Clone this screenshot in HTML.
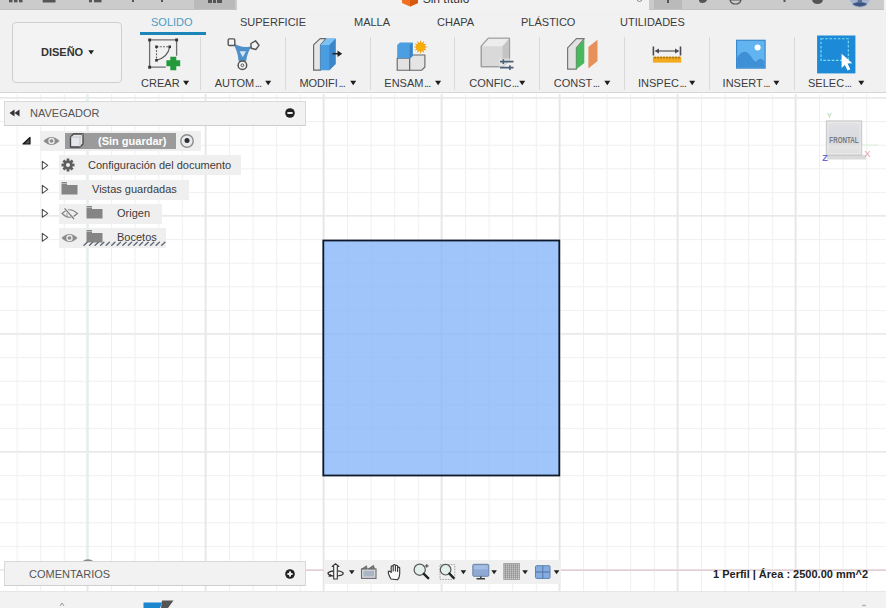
<!DOCTYPE html>
<html><head><meta charset="utf-8">
<style>
*{margin:0;padding:0;box-sizing:border-box}
html,body{width:886px;height:608px;overflow:hidden;background:#fff;font-family:"Liberation Sans",sans-serif;font-size:11px;color:#333}
.a{position:absolute}
#top{left:0;top:0;width:886px;height:10px;background:#f2f2f2}
#ribbon{left:0;top:10px;width:886px;height:83px;background:#f1f1f1;border-bottom:1px solid #d6d6d6}
.tab{position:absolute;top:16px;font-size:11px;color:#3c3c3c;white-space:nowrap}
.sep{position:absolute;top:37px;width:1px;height:53px;background:#d9d9d9}
.lbl{position:absolute;top:77px;font-size:11px;color:#3c3c3c;white-space:nowrap;line-height:12px}
.dots{letter-spacing:-0.9px;margin-left:0.5px}
.crt{position:absolute;top:81px;width:0;height:0;border-left:2.9px solid transparent;border-right:2.9px solid transparent;border-top:4.2px solid #1e1e1e}
.car{display:inline-block;width:0;height:0;border-left:3px solid transparent;border-right:3px solid transparent;border-top:4px solid #333;vertical-align:2px;margin-left:3px}
#vp{left:0;top:94px;width:886px;height:497px;background:#fff;overflow:hidden}
#bottom{left:0;top:591px;width:886px;height:17px;background:#f2f2f2;border-top:1px solid #e6e6e6}
.row{position:absolute;height:19px;background:#efefef}
.rt{position:absolute;font-size:11px;color:#3c3c3c;white-space:nowrap;line-height:12px}
</style></head><body>
<!-- top bar -->
<div class="a" id="top"></div>
<div class="a" style="left:0;top:0;width:237px;height:10px;background:#cbcbcb;border-bottom:1px solid #c2c2c2"></div>
<div class="a" style="left:194px;top:0;width:41px;height:9px;background:#bababa"></div>
<div class="a" style="left:649px;top:0;width:235px;height:10px;background:#cbcbcb;border-bottom:1px solid #c2c2c2"></div>
<div class="a" style="left:654px;top:0;width:28px;height:9px;background:#bababa"></div>

<!-- ribbon -->
<div class="a" id="ribbon"></div>
<div class="a" style="left:12px;top:22px;width:110px;height:61px;border:1px solid #cfcfcf;border-radius:4px;background:#f3f3f3"></div>
<div class="a" style="left:41px;top:46px;font-weight:bold;font-size:11px;color:#333;line-height:12px">DISEÑO</div>
<svg class="a" style="left:0;top:0" width="100" height="60"><path d="M88.3 50.3 H94 L91.15 54.6Z" fill="#222"/></svg>

<div class="tab" style="left:151px;color:#4a9cc6">SOLIDO</div>
<div class="a" style="left:140px;top:32px;width:66px;height:3px;background:#1d86b8"></div>
<div class="tab" style="left:240px">SUPERFICIE</div>
<div class="tab" style="left:354px">MALLA</div>
<div class="tab" style="left:437px">CHAPA</div>
<div class="tab" style="left:521px">PLÁSTICO</div>
<div class="tab" style="left:620px">UTILIDADES</div>

<div class="sep" style="left:200px"></div>
<div class="sep" style="left:285px"></div>
<div class="sep" style="left:370px"></div>
<div class="sep" style="left:454px"></div>
<div class="sep" style="left:539px"></div>
<div class="sep" style="left:624px"></div>
<div class="sep" style="left:709px"></div>
<div class="sep" style="left:794px"></div>

<div class="lbl" style="left:141.1px">CREAR</div>
<div class="lbl" style="left:214.7px">AUTOM<span class="dots">...</span></div>
<div class="lbl" style="left:299.4px">MODIFI<span class="dots">...</span></div>
<div class="lbl" style="left:384.3px">ENSAM<span class="dots">...</span></div>
<div class="lbl" style="left:469.2px">CONFIC<span class="dots">...</span></div>
<div class="lbl" style="left:553.7px">CONST<span class="dots">...</span></div>
<div class="lbl" style="left:638px">INSPEC<span class="dots">...</span></div>
<div class="lbl" style="left:722.6px">INSERT<span class="dots">...</span></div>
<div class="lbl" style="left:808px">SELEC<span class="dots">...</span></div>

<svg class="a" style="left:0;top:0" width="886" height="93"><path d="M183.1 80.8 H189.1 L186.1 85.2Z M265.2 80.8 H271.2 L268.2 85.2Z M350.2 80.8 H356.2 L353.2 85.2Z M435.1 80.8 H441.1 L438.1 85.2Z M519.2 80.8 H525.2 L522.2 85.2Z M604.3 80.8 H610.3 L607.3 85.2Z M689.2 80.8 H695.2 L692.2 85.2Z M773.4 80.8 H779.4 L776.4 85.2Z M858.3 80.8 H864.3 L861.3 85.2Z" fill="#1e1e1e"/></svg>
<svg class="a" style="left:0;top:0" width="886" height="93" viewBox="0 0 886 93">
<!-- CREAR -->
<g>
 <path d="M149.6 39.9 H176.6 V55.7 M149.6 39.9 V67.2 H165.7" fill="none" stroke="#6e6e6e" stroke-width="1.3"/>
 <rect x="148.2" y="38.5" width="2.9" height="2.9" fill="#333"/>
 <rect x="175.2" y="38.5" width="2.9" height="2.9" fill="#333"/>
 <rect x="148.2" y="65.8" width="2.9" height="2.9" fill="#333"/>
 <path d="M156.5 46.8 H169.7 M156.5 46.8 V60.3" fill="none" stroke="#666" stroke-width="1.1" stroke-dasharray="2 1.2"/>
 <path d="M169.7 46.8 Q168 57 156.5 60.3" fill="none" stroke="#555" stroke-width="1.1"/>
 <rect x="155.2" y="45.5" width="2.6" height="2.6" fill="#333"/>
 <rect x="168.4" y="45.5" width="2.6" height="2.6" fill="#333"/>
 <rect x="155.2" y="59" width="2.6" height="2.6" fill="#333"/>
 <path d="M170.3 56.7 H176.3 V60.3 H180.2 V66.3 H176.3 V70.2 H170.3 V66.3 H166.4 V60.3 H170.3Z" fill="#249a3c"/>
</g>
<!-- AUTOM -->
<g>
 <path d="M233.8 43.8 Q242 49.5 251 46.8 Q246.5 52 245.6 61 H239.2 Q238.5 51.5 233.8 43.8Z" fill="#4f90c8" stroke="#4f90c8" stroke-width="1.2" stroke-linejoin="round"/>
 <path d="M239.6 51.2 L246 51.2 L242.8 57.2Z" fill="#cfe6f7"/>
 <rect x="228.2" y="38.9" width="6.6" height="6.6" rx="1.2" fill="#f4f4f4" stroke="#555" stroke-width="1.4"/>
 <path d="M250.9 43.5 L255.5 40.8 L259 45.3 L255.8 49.5 L251.2 48.3Z" fill="#f4f4f4" stroke="#555" stroke-width="1.4" stroke-linejoin="round"/>
 <circle cx="242.4" cy="65.3" r="4.3" fill="#f4f4f4" stroke="#555" stroke-width="1.5"/>
 <circle cx="242.4" cy="65.3" r="1.4" fill="none" stroke="#555" stroke-width="1"/>
</g>
<!-- MODIFI -->
<g>
 <path d="M313.6 44.9 L320.1 38.6 H326 L320.5 44.9 V70.2 H313.6Z" fill="#e6e6e6" stroke="#6a6a6a" stroke-width="1.2" stroke-linejoin="round"/>
 <path d="M320.3 44.9 L326.8 38.6 H335.6 V64 L329.3 70.2 H320.3Z" fill="#4a9de0"/>
 <path d="M329.3 44.9 L335.6 38.6 V64 L329.3 70.2Z" fill="#3b86c8"/>
 <path d="M320.3 44.9 L326.8 38.6 H335.6 L329.3 44.9Z" fill="#7cc0f4"/>
 <path d="M332.5 53.7 H338.5" stroke="#222" stroke-width="1.5"/>
 <path d="M337.5 50.5 L342.2 53.7 L337.5 56.9Z" fill="#222"/>
</g>
<!-- ENSAM -->
<g>
 <path d="M397.2 58.3 H409.7 V70.2 H397.2Z" fill="#e2e2e2" stroke="#666" stroke-width="1.1"/>
 <path d="M409.7 55 H424.9 V67 L421.8 70.2 H409.7Z" fill="#e4e4e4" stroke="#666" stroke-width="1.1" stroke-linejoin="round"/>
 <path d="M397.2 45 L400 42.6 H412.7 V56 L410.5 58.3 H397.2Z" fill="#4b9ee0"/>
 <path d="M409.7 45 L412.7 42.6 V56 L409.7 58.3Z" fill="#3b84c4"/>
 <path d="M420.60 40.00 L421.64 43.14 L424.10 40.94 L423.43 44.17 L426.66 43.50 L424.46 45.96 L427.60 47.00 L424.46 48.04 L426.66 50.50 L423.43 49.83 L424.10 53.06 L421.64 50.86 L420.60 54.00 L419.56 50.86 L417.10 53.06 L417.77 49.83 L414.54 50.50 L416.74 48.04 L413.60 47.00 L416.74 45.96 L414.54 43.50 L417.77 44.17 L417.10 40.94 L419.56 43.14Z" fill="#f0a010"/>
 <circle cx="420.6" cy="47.0" r="3.6" fill="#f8b000"/>
</g>
<!-- CONFIC -->
<g>
 <path d="M481.3 46.2 L488.2 38.3 H509.5 V60.3 L503 66.6 H481.3Z" fill="#d9d9d9" stroke="#9a9a9a" stroke-width="1.2" stroke-linejoin="round"/>
 <path d="M481.3 46.2 L488.2 38.3 H509.5 L502.6 46.2Z" fill="#ececec"/>
 <path d="M502.6 46.2 L509.5 38.3 V60.3 L502.6 66.6Z" fill="#c4c4c4"/>
 <path d="M481.3 46.2 L488.2 38.3 H509.5 V60.3 L503 66.6 H481.3Z" fill="none" stroke="#a0a0a0" stroke-width="1.1" stroke-linejoin="round"/>
 <rect x="499.5" y="58.5" width="15" height="11" fill="#f0f0f0" opacity="0.6"/>
 <path d="M500 61.6 H513.5 M500 67.6 H513.5" stroke="#4a6178" stroke-width="1.6"/>
 <path d="M503.3 59.3 V63.9 M509.9 65.3 V69.9" stroke="#4a6178" stroke-width="1.6"/>
</g>
<!-- CONST -->
<g>
 <path d="M567.6 47.8 L576.4 38.6 H584.3 L576.4 47.8 V69.2 H567.6Z" fill="#e2e2e2" stroke="#777" stroke-width="1.2" stroke-linejoin="round"/>
 <path d="M576.4 47.8 L584.3 39.5 V63 L576.4 69.2Z" fill="#49b85c"/>
 <path d="M588.4 47 L597.5 39.7 V61 L588.4 68.4Z" fill="#e8905a"/>
</g>
<!-- INSPEC -->
<g>
 <path d="M653.4 46.5 V55.4 M680.5 46.5 V55.4" stroke="#4a4a55" stroke-width="1.6"/>
 <path d="M657 51 H677" stroke="#555" stroke-width="1.2"/>
 <path d="M654.5 51 L659 48.5 V53.5Z M679.4 51 L675 48.5 V53.5Z" fill="#4a4a55"/>
 <rect x="652.9" y="56.7" width="28.3" height="5.9" fill="#f2aa1c"/>
 <path d="M655 56.7 V58.5 M658 56.7 V58.5 M661 56.7 V58.5 M664 56.7 V58.5 M667 56.7 V58.5 M670 56.7 V58.5 M673 56.7 V58.5 M676 56.7 V58.5 M679 56.7 V58.5" stroke="#6a4a10" stroke-width="1"/>
</g>
<!-- INSERT -->
<g>
 <rect x="736.6" y="40.3" width="28.5" height="27.8" fill="#62b4f0" stroke="#3c88cc" stroke-width="1.2"/>
 <path d="M737.2 67.5 V58 Q740 52 744.5 51.8 Q749 52 753 59.5 Q755 62.5 757 61 Q759 58.5 761 58.7 Q763.5 59.5 764.5 62 V67.5Z" fill="#3d8fd6"/>
 <circle cx="757.6" cy="47.5" r="3" fill="#fff"/>
</g>
<!-- SELEC -->
<g>
 <rect x="817.1" y="35.5" width="38.3" height="37.9" fill="#1c8ad6"/>
 <rect x="821" y="38.7" width="27.3" height="21.7" fill="none" stroke="#7ee0f0" stroke-width="1.1" stroke-dasharray="2.6 1.6"/>
 <path d="M841.6 53.7 L852.3 63.2 L847.5 63.6 L850.3 69.2 L847.6 70.5 L844.9 64.9 L841.6 68Z" fill="#fff"/>
</g>
</svg>

<!-- viewport -->
<div class="a" id="vp">
<svg width="886" height="497" style="position:absolute;left:0;top:0">
  <defs>
    <pattern id="minor" x="0" y="0" width="23.6" height="23.6" patternUnits="userSpaceOnUse" patternTransform="translate(87.4 3.5)">
      <rect x="0" y="0" width="1.1" height="23.6" fill="#f0f0f0"/>
      <rect x="0" y="0" width="23.6" height="1.1" fill="#f0f0f0"/>
    </pattern>
    <pattern id="major" x="0" y="0" width="118" height="118" patternUnits="userSpaceOnUse" patternTransform="translate(86.7 3)">
      <rect x="0.1" y="0" width="1.4" height="118" fill="#e1e1e1"/>
      <rect x="0" y="0" width="118" height="1.6" fill="#e9e9e9"/>
    </pattern>
  </defs>
  <rect width="886" height="497" fill="url(#minor)"/>
  <rect width="886" height="497" fill="url(#major)"/>
  <rect x="86.3" y="0" width="2" height="476" fill="#e2f1e5"/>
  <rect x="87" y="475.5" width="799" height="1.5" fill="#e6cfd4"/>
  <rect x="323.3" y="146.5" width="236" height="235" fill="#85b5fa" fill-opacity="0.78" stroke="none"/>
  <rect x="323.3" y="146.5" width="236" height="235" fill="none" stroke="#0e1a2c" stroke-width="1.8"/>
</svg>
</div>


<!-- navigator -->
<div class="a" style="left:4px;top:101px;width:302px;height:25px;background:#f2f2f2;border:1px solid #d9d9d9;border-bottom-color:#cfcfcf"></div>
<svg class="a" style="left:9px;top:108px" width="12" height="10" viewBox="0 0 12 10"><path d="M0.5 5 L5.5 1.5 V8.5Z M5.5 5 L10.5 1.5 V8.5Z" fill="#333"/></svg>
<div class="a" style="left:30px;top:107px;font-size:11px;color:#555;line-height:12px">NAVEGADOR</div>
<svg class="a" style="left:284px;top:107px" width="12" height="12" viewBox="0 0 12 12"><circle cx="6" cy="6" r="4.8" fill="#222"/><rect x="3.4" y="5" width="5.2" height="2" fill="#eee"/></svg>

<!-- tree -->
<svg class="a" style="left:22px;top:136px" width="9" height="9" viewBox="0 0 9 9"><path d="M1 8 L8 1.5 V8Z" fill="#555" stroke="#111" stroke-width="1.2" stroke-linejoin="round"/></svg>
<div class="row" style="left:40px;top:131px;width:161px;height:20px"></div>
<svg class="a" style="left:43px;top:135px" width="17" height="12" viewBox="0 0 17 12"><path d="M0.5 6 Q8.5 -2 16.5 6 Q8.5 14 0.5 6Z" fill="#8c8c8c"/><circle cx="8.5" cy="6" r="3.2" fill="#e8e8e8"/><circle cx="8.5" cy="6" r="1.8" fill="#8c8c8c"/></svg>
<div class="a" style="left:65px;top:133px;width:111px;height:16px;background:#9b9b9b"></div>
<svg class="a" style="left:69px;top:133px" width="16" height="15" viewBox="0 0 16 15"><path d="M1.5 4 L4.5 1 H14 V11 L11 14 H1.5Z" fill="#e4e6ec" stroke="#444" stroke-width="1.3" stroke-linejoin="round"/><path d="M1.5 4 H11 V14 M11 4 L14 1" fill="none" stroke="#bbb" stroke-width="0.8"/></svg>
<div class="rt" style="left:98px;top:135px;color:#fff;font-weight:bold">(Sin guardar)</div>
<svg class="a" style="left:179px;top:133px" width="16" height="16" viewBox="0 0 16 16"><circle cx="8" cy="8" r="6.2" fill="#e9ebf0" stroke="#8c8c8c" stroke-width="1.4"/><circle cx="8" cy="7.6" r="2.5" fill="#2e2e2e"/></svg>

<svg class="a" style="left:40.5px;top:160px" width="8" height="11" viewBox="0 0 8 11"><path d="M1.3 1.3 L6.8 5.3 L1.3 9.3Z" fill="none" stroke="#4a4a4a" stroke-width="1.05" stroke-linejoin="round"/></svg>
<div class="row" style="left:59px;top:155px;width:182px;height:20px"></div>
<svg class="a" style="left:61px;top:158px" width="14" height="14" viewBox="0 0 14 14"><g fill="#5e5e5e"><circle cx="7" cy="7" r="4.6"/><rect x="5.6" y="0.5" width="2.8" height="13"/><rect x="0.5" y="5.6" width="13" height="2.8"/><rect x="5.6" y="0.5" width="2.8" height="13" transform="rotate(45 7 7)"/><rect x="5.6" y="0.5" width="2.8" height="13" transform="rotate(-45 7 7)"/></g><circle cx="7" cy="7" r="2" fill="#efefef"/></svg>
<div class="rt" style="left:88px;top:159px">Configuración del documento</div>

<svg class="a" style="left:40.5px;top:184px" width="8" height="11" viewBox="0 0 8 11"><path d="M1.3 1.3 L6.8 5.3 L1.3 9.3Z" fill="none" stroke="#4a4a4a" stroke-width="1.05" stroke-linejoin="round"/></svg>
<div class="row" style="left:59px;top:180px;width:130px;height:20px"></div>
<svg class="a" style="left:61px;top:182px" width="17" height="13" viewBox="0 0 17 13"><path d="M0.5 1.5 H6 V3 H16.5 V12.5 H0.5Z" fill="#858585"/><rect x="0.5" y="0" width="5.5" height="1" fill="#858585"/></svg>
<div class="rt" style="left:92px;top:183px">Vistas guardadas</div>

<svg class="a" style="left:40.5px;top:208px" width="8" height="11" viewBox="0 0 8 11"><path d="M1.3 1.3 L6.8 5.3 L1.3 9.3Z" fill="none" stroke="#4a4a4a" stroke-width="1.05" stroke-linejoin="round"/></svg>
<div class="row" style="left:59px;top:204px;width:103px;height:20px"></div>
<svg class="a" style="left:61px;top:207px" width="18" height="13" viewBox="0 0 18 13"><path d="M1 6.5 Q8.5 -1 16.5 6.5 Q8.5 14 1 6.5Z" fill="none" stroke="#888" stroke-width="1.15"/><path d="M6.3 9.5 Q4.8 6.5 7.2 4.2" fill="none" stroke="#999" stroke-width="1"/><path d="M4.4 1.5 L13 12" stroke="#efefef" stroke-width="2.6"/><path d="M3.6 1.3 L13 12" stroke="#7a7a7a" stroke-width="1.2"/></svg>
<svg class="a" style="left:86px;top:206px" width="17" height="13" viewBox="0 0 17 13"><path d="M0.5 1.5 H6 V3 H16.5 V12.5 H0.5Z" fill="#858585"/><rect x="0.5" y="0" width="5.5" height="1" fill="#858585"/></svg>
<div class="rt" style="left:117px;top:207px">Origen</div>

<svg class="a" style="left:40.5px;top:232px" width="8" height="11" viewBox="0 0 8 11"><path d="M1.3 1.3 L6.8 5.3 L1.3 9.3Z" fill="none" stroke="#4a4a4a" stroke-width="1.05" stroke-linejoin="round"/></svg>
<div class="row" style="left:59px;top:228px;width:107px;height:20px"></div>
<svg class="a" style="left:61px;top:232px" width="17" height="12" viewBox="0 0 17 12"><path d="M0.5 6 Q8.5 -2 16.5 6 Q8.5 14 0.5 6Z" fill="#8c8c8c"/><circle cx="8.5" cy="6" r="3.2" fill="#e8e8e8"/><circle cx="8.5" cy="6" r="1.8" fill="#8c8c8c"/></svg>
<svg class="a" style="left:86px;top:230px" width="17" height="13" viewBox="0 0 17 13"><path d="M0.5 1.5 H6 V3 H16.5 V12.5 H0.5Z" fill="#858585"/><rect x="0.5" y="0" width="5.5" height="1" fill="#858585"/></svg>
<div class="rt" style="left:117px;top:231px">Bocetos</div>
<svg class="a" style="left:83px;top:241px" width="84" height="6" viewBox="0 0 84 6"><path d="M1.00 4.2 L4.20 1.2 M6.55 4.2 L9.75 1.2 M12.10 4.2 L15.30 1.2 M17.65 4.2 L20.85 1.2 M23.20 4.2 L26.40 1.2 M28.75 4.2 L31.95 1.2 M34.30 4.2 L37.50 1.2 M39.85 4.2 L43.05 1.2 M45.40 4.2 L48.60 1.2 M50.95 4.2 L54.15 1.2 M56.50 4.2 L59.70 1.2 M62.05 4.2 L65.25 1.2 M67.60 4.2 L70.80 1.2 M73.15 4.2 L76.35 1.2 M78.70 4.2 L81.90 1.2" stroke="#646c78" stroke-width="1.5" stroke-linecap="round"/></svg>

<!-- comments -->
<svg class="a" style="left:80px;top:555px" width="16" height="7"><path d="M2 6.5 Q8 2.2 14 6.5Z" fill="#8a8a8a"/></svg>

<div class="a" style="left:4px;top:561px;width:302px;height:25px;background:#f2f2f2;border:1px solid #d9d9d9;border-bottom-color:#cfcfcf"></div>
<div class="a" style="left:29px;top:568px;font-size:11px;color:#555;line-height:12px">COMENTARIOS</div>
<svg class="a" style="left:284px;top:568px" width="12" height="12" viewBox="0 0 12 12"><circle cx="6" cy="6" r="4.8" fill="#222"/><rect x="3.4" y="5" width="5.2" height="2" fill="#eee"/><rect x="5" y="3.4" width="2" height="5.2" fill="#eee"/></svg>

<!-- status -->
<div class="a" style="left:713px;top:568px;font-size:11px;font-weight:bold;color:#222;line-height:12px">1 Perfil | Área : 2500.00 mm^2</div>

<!-- bottom -->
<div class="a" id="bottom"></div>


<!-- viewcube -->
<svg class="a" style="left:818px;top:108px" width="60" height="55" viewBox="818 108 60 55">
 <defs><linearGradient id="vcg" x1="0" y1="0" x2="0" y2="1">
  <stop offset="0" stop-color="#e2e2e2"/><stop offset="0.3" stop-color="#dcdde2"/><stop offset="0.65" stop-color="#d9dadd"/><stop offset="0.75" stop-color="#e4e4e4"/><stop offset="1" stop-color="#dedede"/>
 </linearGradient></defs>
 <rect x="827" y="155" width="39" height="4.5" fill="#cdcdcd" opacity="0.75"/>
 <rect x="826.3" y="120.9" width="35.4" height="34.4" fill="url(#vcg)" stroke="#c9c9c9" stroke-width="1"/>
 <rect x="828" y="122.5" width="32" height="31" fill="none" stroke="#ebebeb" stroke-width="0.8"/>
 <path d="M862 145 H878" stroke="#d8f0d8" stroke-width="1"/>
 <text x="0" y="0" font-family="Liberation Sans" font-size="9.3" font-weight="bold" fill="#7a7a7a" text-anchor="middle" transform="translate(844 142.8) scale(0.67 1)">FRONTAL</text>
 <text x="829.3" y="117.5" font-family="Liberation Sans" font-size="7.5" fill="#98d498" text-anchor="middle">Y</text>
 <text x="825" y="160.5" font-family="Liberation Sans" font-size="9" font-weight="bold" fill="#6a6ad6" text-anchor="middle">Z</text>
 <text x="867.5" y="156.5" font-family="Liberation Sans" font-size="9.5" fill="#e8a4ac" text-anchor="middle">X</text>
</svg>

<!-- nav toolbar -->
<div class="a" style="left:324px;top:560px;width:237px;height:24px;background:#f0f0f0"></div>
<svg class="a" style="left:320px;top:556px" width="250" height="32" viewBox="320 556 250 32">
 <g fill="#222">
  <path d="M349 570.3 H354.6 L351.8 574.3Z"/>
  <path d="M460.6 570.3 H466.2 L463.4 574.3Z"/>
  <path d="M491.3 570.3 H496.9 L494.1 574.3Z"/>
  <path d="M522.3 570.3 H527.9 L525.1 574.3Z"/>
  <path d="M553.8 570.3 H559.4 L556.6 574.3Z"/>
 </g>
 <!-- orbit -->
 <path d="M333.5 571 Q328 571.8 328 573.3 Q328.5 575.8 335.5 576 Q343 575.8 343.2 573.2 Q343 571.5 337.6 570.8" fill="none" stroke="#333" stroke-width="1.3"/>
 <path d="M333.7 566.5 V579 H337.3 V566.5 H338.8 L335.5 563.8 L332.2 566.5Z" fill="#fafafa" stroke="#333" stroke-width="1.1" stroke-linejoin="round"/>
 <path d="M328.5 576.2 L331.2 576.3 L330 574" fill="#333" stroke="#333" stroke-width="0.8"/>
 <!-- look at -->
 <rect x="361.5" y="568.9" width="14.5" height="9.5" fill="#d6d9de" stroke="#6a6a6a" stroke-width="1.1"/>
 <rect x="363.4" y="570.8" width="10.7" height="5.7" fill="#a9b5c5"/>
 <path d="M362 568.8 L366.5 565.8 L367 568.8Z M368.5 568.8 L373.5 565.3 L374.5 568.8Z" fill="#777" stroke="#666" stroke-width="0.8" stroke-linejoin="round"/>
 <!-- hand -->
 <path d="M391 579 Q388 574 388.3 571.5 Q389.5 570.5 391.2 572.5 V566.5 Q392.2 565 393.2 566.5 V571 V565.3 Q394.3 563.8 395.4 565.3 V571 V566 Q396.5 564.5 397.6 566 V571.5 V567.8 Q398.6 566.5 399.7 567.8 V574 Q399.5 578 397.5 579.8Z" fill="#fafafa" stroke="#333" stroke-width="1.1" stroke-linejoin="round"/>
 <!-- zoom -->
 <circle cx="419.7" cy="569.7" r="5.6" fill="#e2efec" stroke="#555" stroke-width="1.2"/>
 <path d="M423.8 573.8 L428.2 578.2" stroke="#222" stroke-width="2.4" stroke-linecap="round"/>
 <path d="M425 565.9 H428.6 M426.8 564.1 V567.7" stroke="#333" stroke-width="0.9"/>
 <!-- zoom window -->
 <rect x="440" y="564.6" width="14.8" height="14.8" fill="none" stroke="#888" stroke-width="0.8" stroke-dasharray="1.5 1.2"/>
 <circle cx="445.6" cy="569.7" r="5.3" fill="#e2efec" stroke="#555" stroke-width="1.2"/>
 <path d="M449.4 573.6 L453.6 577.8" stroke="#222" stroke-width="2.4" stroke-linecap="round"/>
 <!-- monitor -->
 <rect x="472.8" y="564.3" width="16" height="12" rx="1" fill="#8eaad4" stroke="#6a84aa" stroke-width="1"/>
 <rect x="474" y="565.4" width="13.6" height="4" fill="#a6bee2"/>
 <path d="M480.8 576.5 V578 M476.5 578.8 H485" stroke="#3a3a3a" stroke-width="1.5"/>
 <!-- grid -->
 <rect x="503.8" y="563.6" width="15.8" height="15.8" fill="#d8d8d8"/>
 <path d="M503.8 565.2 H519.6 M503.8 567.2 H519.6 M503.8 569.2 H519.6 M503.8 571.2 H519.6 M503.8 573.2 H519.6 M503.8 575.2 H519.6 M503.8 577.2 H519.6 M505.4 563.6 V579.4 M507.4 563.6 V579.4 M509.4 563.6 V579.4 M511.4 563.6 V579.4 M513.4 563.6 V579.4 M515.4 563.6 V579.4 M517.4 563.6 V579.4" stroke="#8a8a8a" stroke-width="0.7"/>
 <rect x="503.8" y="563.6" width="15.8" height="15.8" fill="none" stroke="#999" stroke-width="0.8"/>
 <!-- viewports -->
 <rect x="535.5" y="565.7" width="14.5" height="12.7" rx="1" fill="#86ace0" stroke="#5f82b4" stroke-width="1"/>
 <path d="M542.75 565.7 V578.4 M535.5 572 H550" stroke="#5f82b4" stroke-width="1.3"/>
</svg>

<!-- top bar icons -->
<svg class="a" style="left:0;top:0" width="886" height="11" viewBox="0 0 886 11">
 <g fill="#555">
  <rect x="9" y="0" width="3.5" height="2.3"/><rect x="14" y="0" width="3.5" height="2.3"/><rect x="19" y="0" width="3.5" height="2.3"/>
  <rect x="42.7" y="0" width="12.8" height="2.5"/>
  <rect x="89" y="0" width="3" height="2.3"/><rect x="94" y="0" width="7.5" height="2.3"/>
  <rect x="132" y="0" width="2" height="2"/>
  <rect x="161" y="0" width="2" height="2"/>
  <rect x="208" y="0" width="4" height="3"/><rect x="213" y="0" width="3" height="3"/><rect x="217" y="0" width="5" height="3"/>
  <rect x="667" y="0" width="2" height="3"/>
  <path d="M699 0 H707 Q706 3 702 3 Q699.5 3 699 1Z"/>
  <path d="M730 0 H741 Q740 4 735.5 4 Q731 4 730 0Z" fill="none" stroke="#555" stroke-width="1.2"/>
  <rect x="783.5" y="0" width="2" height="2"/>
  <path d="M812 0 H823 Q822 4 817.5 4 Q813 4 812 0Z"/>
  <circle cx="639.5" cy="-1" r="2.5" fill="none" stroke="#888" stroke-width="1"/>
 </g>
 <defs><clipPath id="av"><circle cx="859.8" cy="-4.6" r="11.9"/></clipPath></defs>
 <g clip-path="url(#av)"><rect x="846" y="-17" width="28" height="25" fill="#a3b4cc"/><ellipse cx="859.8" cy="7.5" rx="9.5" ry="5.5" fill="#3c5684"/><rect x="857.6" y="-2" width="4.4" height="4.5" fill="#5a7096"/></g>
 <circle cx="859.8" cy="-4.6" r="11.6" fill="none" stroke="#dfe4ec" stroke-width="0.8" opacity="0.7"/>
 
 <path d="M402 -2 L410 -5 L418 -2 V3 L410 6.5 L402 3Z" fill="#f07020"/>
 <path d="M410 -1 L418 -2 V3 L410 6.5Z" fill="#d85a10"/>
 <text x="422.7" y="3" font-family="Liberation Sans" font-size="12" fill="#333">Sin título</text>
</svg>

<!-- bottom bar items -->
<svg class="a" style="left:0;top:591px" width="886" height="17" viewBox="0 591 886 17">
 <path d="M143.5 602.5 H162 L160 608 H143.5Z" fill="#1a86d0"/>
 <path d="M162 600.5 H173.5 L168 608 H161Z" fill="#555"/>
 <path d="M60 606 L62 603 L64 606" fill="none" stroke="#999" stroke-width="1"/>
 <path d="M862 606 Q864 604 866 606" fill="none" stroke="#999" stroke-width="1"/>
</svg>

</body></html>
